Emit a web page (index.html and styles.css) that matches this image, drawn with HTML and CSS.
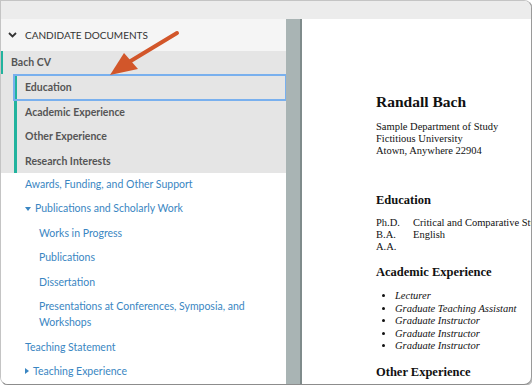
FILE: index.html
```html
<!DOCTYPE html>
<html lang="en">
<head>
  <meta charset="UTF-8">
  <title>Candidate Documents</title>
  <link rel="stylesheet" href="styles.css">
</head>
<body>
  <div class="window">
    <div class="topbar"></div>
    <div class="workspace">
      <aside class="sidebar">
        <div class="section-head">
          <svg class="chev" width="9" height="6" viewBox="0 0 9 6"><path d="M1 1l3.5 3.5L8 1" fill="none" stroke="#333" stroke-width="1.8"/></svg>
          <span>CANDIDATE DOCUMENTS</span>
        </div>
        <div class="doc-title">Bach CV</div>
        <ul class="sections">
          <li class="active">Education</li>
          <li>Academic Experience</li>
          <li>Other Experience</li>
          <li>Research Interests</li>
        </ul>
        <ul class="links">
          <li>Awards, Funding, and Other Support</li>
          <li><span class="tri down"></span>Publications and Scholarly Work</li>
          <li class="sub">Works in Progress</li>
          <li class="sub">Publications</li>
          <li class="sub">Dissertation</li>
          <li class="sub">Presentations at Conferences, Symposia, and Workshops</li>
          <li>Teaching Statement</li>
          <li><span class="tri right"></span>Teaching Experience</li>
        </ul>
      </aside>
      <div class="gutter"></div>
      <main class="page">
        <h1>Randall Bach</h1>
        <p class="address">Sample Department of Study<br>Fictitious University<br>Atown, Anywhere 22904</p>
        <h2 class="first">Education</h2>
        <div class="degrees">
          <div class="degree"><span class="deg">Ph.D.</span><span>Critical and Comparative Studies</span></div>
          <div class="degree"><span class="deg">B.A.</span><span>English</span></div>
          <div class="degree"><span class="deg">A.A.</span></div>
        </div>
        <h2>Academic Experience</h2>
        <ul class="jobs">
          <li>Lecturer</li>
          <li>Graduate Teaching Assistant</li>
          <li>Graduate Instructor</li>
          <li>Graduate Instructor</li>
          <li>Graduate Instructor</li>
        </ul>
        <h2>Other Experience</h2>
      </main>
    </div>
    <svg class="arrow" width="90" height="60" viewBox="0 0 90 60">
      <line x1="78" y1="5" x2="30" y2="34" stroke="#d2562a" stroke-width="4" stroke-linecap="round"/>
      <polygon points="11,47 25,25 39,41" fill="#d2562a"/>
    </svg>
  </div>
</body>
</html>
```

FILE: styles.css
```css
body {
  margin: 0;
  background: #fff;
}
.window {
  position: relative;
  width: 530px;
  height: 383px;
  border: 1px solid #c4c4c4;
  border-right-color: #9a9a9a;
  border-bottom-color: #8c8c8c;
  border-radius: 0 8px 8px 8px;
  box-shadow: 1px 1px 0 #bdbdbd;
  overflow: hidden;
  display: flex;
  flex-direction: column;
  background: #fff;
}
.topbar {
  height: 18px;
  background: #ececec;
  flex-shrink: 0;
}
.workspace {
  display: flex;
  flex: 1;
  min-height: 0;
}
.sidebar {
  width: 285px;
  flex-shrink: 0;
  font-family: Lato, "Open Sans", sans-serif;
  font-size: 10.5px;
  background: #fff;
}
.section-head {
  height: 32px;
  background: #f5f5f5;
  display: flex;
  align-items: center;
  padding-left: 7px;
  color: #333;
  font-size: 10px;
}
.section-head .chev {
  margin-right: 8px;
}
.doc-title {
  height: 23px;
  line-height: 23px;
  background: #e5e5e5;
  border-left: 2px solid #22b39e;
  padding-left: 8px;
  color: #555;
  font-weight: bold;
}
.sections {
  list-style: none;
  margin: 0;
  padding: 1px 0 0 13px;
  background: #e5e5e5;
}
.sections li {
  height: 24.5px;
  line-height: 24.5px;
  border-left: 3px solid #22b39e;
  padding-left: 8px;
  color: #555;
  font-weight: bold;
  box-sizing: border-box;
}
.sections li.active {
  outline: 2px solid #79b0ee;
  outline-offset: -1px;
}
.links {
  list-style: none;
  margin: -1px 0 0;
  padding: 0 0 0 24px;
  color: #3a86c2;
}
.links li {
  padding: 4px 0;
  line-height: 16.4px;
}
.links li.sub {
  padding-left: 14px;
  padding-right: 30px;
}
.tri {
  display: inline-block;
  width: 0;
  height: 0;
  margin-right: 4px;
  vertical-align: 1px;
}
.tri.down {
  border-left: 3.5px solid transparent;
  border-right: 3.5px solid transparent;
  border-top: 4px solid #3a86c2;
}
.tri.right {
  border-top: 3.5px solid transparent;
  border-bottom: 3.5px solid transparent;
  border-left: 4px solid #3a86c2;
}
.gutter {
  width: 14px;
  flex-shrink: 0;
  background: #a9b4b4;
  border-right: 2px solid #7f8b8b;
}
.page {
  flex: 1;
  padding: 74px 0 0 74px;
  font-family: "Liberation Serif", "Times New Roman", serif;
  color: #111;
  font-size: 10.5px;
  white-space: nowrap;
  overflow: hidden;
}
.page h1 {
  margin: 0;
  font-size: 15.5px;
  line-height: 18px;
}
.page .address {
  margin: 10px 0 0;
  line-height: 12px;
}
.page h2 {
  margin: 12px 0 10px;
  font-size: 12.5px;
  line-height: 15px;
}
.page h2.first {
  margin-top: 36px;
  margin-bottom: 9px;
}
.degree {
  display: flex;
  line-height: 12px;
}
.degree .deg {
  width: 37px;
  flex-shrink: 0;
}
.jobs {
  margin: 0 0 1px;
  padding-left: 19px;
  font-style: italic;
}
.jobs li {
  line-height: 12.6px;
}
.arrow {
  position: absolute;
  left: 98px;
  top: 27px;
}
```
